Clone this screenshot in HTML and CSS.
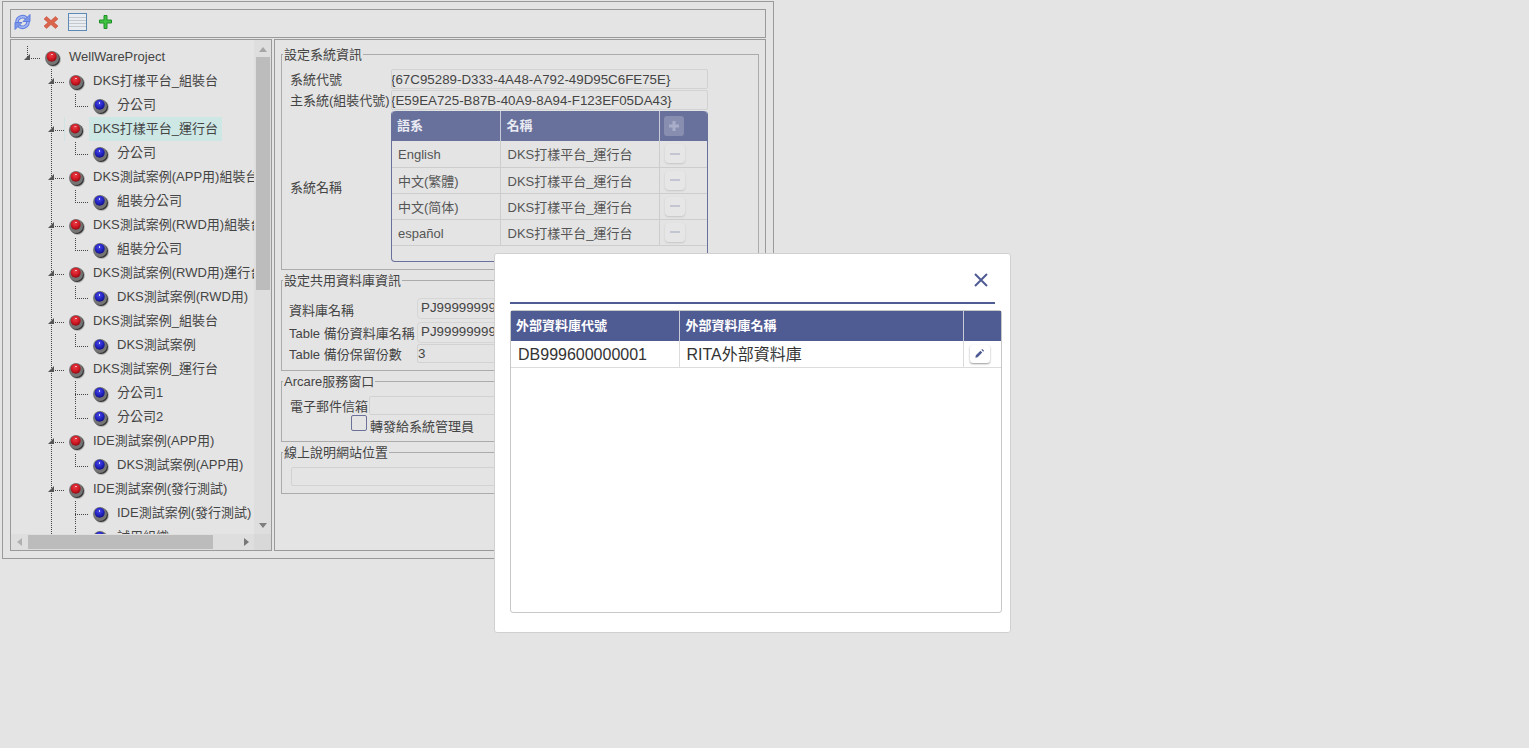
FILE: index.html
```html
<!DOCTYPE html>
<html lang="zh-Hant">
<head>
<meta charset="utf-8">
<title>WellWareProject</title>
<link rel="stylesheet" href="styles.css">
</head>
<body>
<svg class="defs" xmlns="http://www.w3.org/2000/svg">
  <defs>
    <radialGradient id="redball" cx="45%" cy="35%" r="70%"><stop offset="0" stop-color="#ea3f48"/><stop offset=".6" stop-color="#cc1620"/><stop offset="1" stop-color="#7c0b12"/></radialGradient>
    <radialGradient id="blueball" cx="45%" cy="35%" r="70%"><stop offset="0" stop-color="#4a4ae4"/><stop offset=".6" stop-color="#2020c0"/><stop offset="1" stop-color="#0f0f70"/></radialGradient>
  </defs>
  <symbol id="red" viewBox="0 0 24 24"><circle cx="13.5" cy="14.5" r="7.5" fill="#b4b4b4"/><circle cx="13" cy="14" r="7" fill="#333"/><circle cx="12" cy="13" r="7" fill="#757575"/><circle cx="11.7" cy="11.7" r="5" fill="url(#redball)"/><rect x="11" y="9" width="2" height="1" fill="#f2b4b8"/></symbol>
  <symbol id="blue" viewBox="0 0 24 24"><circle cx="13.5" cy="14.5" r="7.5" fill="#b4b4b4"/><circle cx="13" cy="14" r="7" fill="#333"/><circle cx="12" cy="13" r="7" fill="#757575"/><circle cx="11.7" cy="11.7" r="5" fill="url(#blueball)"/><rect x="11" y="9" width="1" height="2" fill="#cfd0f7"/></symbol>
  <symbol id="root-tw" viewBox="0 0 24 24"><path class="dot" d="M11.500 1V13M15 13.500H24"/><path class="arrow" d="M8 15H14V9Z"/></symbol>
  <symbol id="open" viewBox="0 0 24 24"><path class="dot" d="M11.500 0V24M15 13.500H24"/><path class="arrow" d="M8 15H14V9Z"/></symbol>
  <symbol id="elbow" viewBox="0 0 24 24"><path class="dot" d="M11.500 1V13.500H24"/></symbol>
  <symbol id="tee" viewBox="0 0 24 24"><path class="dot" d="M11.500 0V24M11 13.500H24"/></symbol>
  <symbol id="guide" viewBox="0 0 24 24"><path class="dot" d="M11.500 0V24"/></symbol>
</svg>

<main class="app">
  <div class="toolbar">
    <svg class="tool" viewBox="0 0 20 20"><g fill="none" stroke-linecap="butt"><path d="M5 9.500A5.500 5.500 0 0 1 14.500 5.500" stroke="#5f7ede" stroke-width="3.600"/><path d="M16 8.500A5.500 5.500 0 0 1 6.500 12.500" stroke="#5f7ede" stroke-width="3.600"/><path d="M5 9.500A5.500 5.500 0 0 1 14.500 5.500" stroke="#a3b6f3" stroke-width="1.600"/><path d="M16 8.500A5.500 5.500 0 0 1 6.500 12.500" stroke="#a3b6f3" stroke-width="1.600"/></g><path d="M18 1.500V8.500H11Z" fill="#7d97e8" stroke="#5f7ede"/><path d="M3 16.500V9.500H10Z" fill="#7d97e8" stroke="#5f7ede"/></svg>
    <svg class="tool" viewBox="0 0 20 20"><path d="M6.500 3.500 11 7.500l4.500-4 2.500 2.500-4 3.500 4 3.500-2.500 2.500-4.500-4-4.500 4L4 13l4-3.500-4-3.500z" fill="#d9654d" stroke="#c9503c" stroke-width=".6"/></svg>
    <svg class="tool" viewBox="0 0 20 20"><rect x=".5" y=".5" width="18" height="17" fill="#e9edf1" stroke="#5c8ab4"/><path d="M1 4.500h17M1 7.500h17M1 10.500h17M1 13.500h17" stroke="#c4c9ce"/></svg>
    <svg class="tool" viewBox="0 0 20 20"><path d="M8 2.500h3v4.500h4.500v3H11v5.500H8V10H3.500V7H8z" fill="#3fc33f" stroke="#1f8f2a"/></svg>
  </div>
  <div class="panes">
    <section class="tree-pane">
      <div class="tree-top">
        <div class="tree-view">
          <ul class="tree">
            <li class="row"><span class="pad"></span><svg class="cell"><use href="#root-tw"/></svg><span class="node"><svg class="ball"><use href="#red"/></svg><span class="label">WellWareProject</span></span></li>
            <li class="row"><span class="pad"></span><svg class="cell"><use href="#open"/></svg><span class="node"><svg class="ball"><use href="#red"/></svg><span class="label">DKS打樣平台_組裝台</span></span></li>
            <li class="row"><span class="pad"></span><svg class="cell"><use href="#guide"/></svg><svg class="cell"><use href="#elbow"/></svg><span class="node"><svg class="ball"><use href="#blue"/></svg><span class="label">分公司</span></span></li>
            <li class="row"><span class="pad"></span><svg class="cell"><use href="#open"/></svg><span class="node selected"><svg class="ball"><use href="#red"/></svg><span class="label">DKS打樣平台_運行台</span></span></li>
            <li class="row"><span class="pad"></span><svg class="cell"><use href="#guide"/></svg><svg class="cell"><use href="#elbow"/></svg><span class="node"><svg class="ball"><use href="#blue"/></svg><span class="label">分公司</span></span></li>
            <li class="row"><span class="pad"></span><svg class="cell"><use href="#open"/></svg><span class="node"><svg class="ball"><use href="#red"/></svg><span class="label">DKS測試案例(APP用)組裝台</span></span></li>
            <li class="row"><span class="pad"></span><svg class="cell"><use href="#guide"/></svg><svg class="cell"><use href="#elbow"/></svg><span class="node"><svg class="ball"><use href="#blue"/></svg><span class="label">組裝分公司</span></span></li>
            <li class="row"><span class="pad"></span><svg class="cell"><use href="#open"/></svg><span class="node"><svg class="ball"><use href="#red"/></svg><span class="label">DKS測試案例(RWD用)組裝台</span></span></li>
            <li class="row"><span class="pad"></span><svg class="cell"><use href="#guide"/></svg><svg class="cell"><use href="#elbow"/></svg><span class="node"><svg class="ball"><use href="#blue"/></svg><span class="label">組裝分公司</span></span></li>
            <li class="row"><span class="pad"></span><svg class="cell"><use href="#open"/></svg><span class="node"><svg class="ball"><use href="#red"/></svg><span class="label">DKS測試案例(RWD用)運行台</span></span></li>
            <li class="row"><span class="pad"></span><svg class="cell"><use href="#guide"/></svg><svg class="cell"><use href="#elbow"/></svg><span class="node"><svg class="ball"><use href="#blue"/></svg><span class="label">DKS測試案例(RWD用)</span></span></li>
            <li class="row"><span class="pad"></span><svg class="cell"><use href="#open"/></svg><span class="node"><svg class="ball"><use href="#red"/></svg><span class="label">DKS測試案例_組裝台</span></span></li>
            <li class="row"><span class="pad"></span><svg class="cell"><use href="#guide"/></svg><svg class="cell"><use href="#elbow"/></svg><span class="node"><svg class="ball"><use href="#blue"/></svg><span class="label">DKS測試案例</span></span></li>
            <li class="row"><span class="pad"></span><svg class="cell"><use href="#open"/></svg><span class="node"><svg class="ball"><use href="#red"/></svg><span class="label">DKS測試案例_運行台</span></span></li>
            <li class="row"><span class="pad"></span><svg class="cell"><use href="#guide"/></svg><svg class="cell"><use href="#tee"/></svg><span class="node"><svg class="ball"><use href="#blue"/></svg><span class="label">分公司1</span></span></li>
            <li class="row"><span class="pad"></span><svg class="cell"><use href="#guide"/></svg><svg class="cell"><use href="#elbow"/></svg><span class="node"><svg class="ball"><use href="#blue"/></svg><span class="label">分公司2</span></span></li>
            <li class="row"><span class="pad"></span><svg class="cell"><use href="#open"/></svg><span class="node"><svg class="ball"><use href="#red"/></svg><span class="label">IDE測試案例(APP用)</span></span></li>
            <li class="row"><span class="pad"></span><svg class="cell"><use href="#guide"/></svg><svg class="cell"><use href="#elbow"/></svg><span class="node"><svg class="ball"><use href="#blue"/></svg><span class="label">DKS測試案例(APP用)</span></span></li>
            <li class="row"><span class="pad"></span><svg class="cell"><use href="#open"/></svg><span class="node"><svg class="ball"><use href="#red"/></svg><span class="label">IDE測試案例(發行測試)</span></span></li>
            <li class="row"><span class="pad"></span><svg class="cell"><use href="#guide"/></svg><svg class="cell"><use href="#tee"/></svg><span class="node"><svg class="ball"><use href="#blue"/></svg><span class="label">IDE測試案例(發行測試)</span></span></li>
            <li class="row"><span class="pad"></span><svg class="cell"><use href="#guide"/></svg><svg class="cell"><use href="#elbow"/></svg><span class="node"><svg class="ball"><use href="#blue"/></svg><span class="label">試用組織</span></span></li>
          </ul>
        </div>
        <div class="vscroll">
          <span class="arrow-up"></span>
          <span class="vthumb"></span>
          <span class="arrow-down"></span>
        </div>
      </div>
      <div class="hscroll">
        <span class="arrow-left"></span>
        <span class="hthumb"></span>
        <span class="arrow-right"></span>
        <span class="corner"></span>
      </div>
    </section>

    <section class="form-pane">
      <fieldset class="fs fs-system">
        <legend>設定系統資訊</legend>
        <div class="frow"><label class="lab lab-sys">系統代號</label><input class="inp inp-sys" readonly value="{67C95289-D333-4A48-A792-49D95C6FE75E}"></div>
        <div class="frow"><label class="lab lab-sys">主系統(組裝代號)</label><input class="inp inp-sys" readonly value="{E59EA725-B87B-40A9-8A94-F123EF05DA43}"></div>
        <div class="frow frow-names">
          <label class="lab lab-sys">系統名稱</label>
          <div class="lang-box">
            <table class="lang">
              <thead><tr><th class="c1">語系</th><th class="c2">名稱</th><th class="c3"><span class="plus-btn"><svg viewBox="0 0 12 12" class="pm"><path d="M4.500 1h3v3.500H11v3H7.500V11h-3V7.500H1v-3h3.500z"/></svg></span></th></tr></thead>
              <tbody>
                <tr><td>English</td><td>DKS打樣平台_運行台</td><td class="c3"><span class="minus-btn"></span></td></tr>
                <tr><td>中文(繁體)</td><td>DKS打樣平台_運行台</td><td class="c3"><span class="minus-btn"></span></td></tr>
                <tr><td>中文(简体)</td><td>DKS打樣平台_運行台</td><td class="c3"><span class="minus-btn"></span></td></tr>
                <tr><td>español</td><td>DKS打樣平台_運行台</td><td class="c3"><span class="minus-btn"></span></td></tr>
              </tbody>
            </table>
          </div>
        </div>
      </fieldset>

      <fieldset class="fs fs-db">
        <legend>設定共用資料庫資訊</legend>
        <div class="frow frow-db1"><label class="lab lab-db">資料庫名稱</label><input class="inp inp-db" readonly value="PJ9999999999"></div>
        <div class="frow frow-db2"><label class="lab lab-db">Table 備份資料庫名稱</label><input class="inp inp-db" readonly value="PJ9999999999"></div>
        <div class="frow frow-db3"><label class="lab lab-db">Table 備份保留份數</label><input class="inp inp-num" readonly value="3"></div>
      </fieldset>

      <fieldset class="fs fs-arcare">
        <legend>Arcare服務窗口</legend>
        <div class="frow"><label class="lab lab-mail">電子郵件信箱</label><input class="inp inp-mail" readonly></div>
        <div class="frow frow-check"><input type="checkbox" class="check" id="fwd"><label class="check-lab" for="fwd">轉發給系統管理員</label></div>
      </fieldset>

      <fieldset class="fs fs-help">
        <legend>線上說明網站位置</legend>
        <input class="inp inp-help" readonly>
      </fieldset>
    </section>
  </div>
</main>

<div class="dialog" role="dialog">
  <header class="dialog-head">
    <svg class="close" viewBox="0 0 16 16"><path d="M2 2 14 14M14 2 2 14"/></svg>
  </header>
  <div class="grid-box">
    <table class="grid">
      <thead><tr><th class="g1">外部資料庫代號</th><th class="g2">外部資料庫名稱</th><th class="g3"></th></tr></thead>
      <tbody>
        <tr>
          <td>DB999600000001</td>
          <td>RITA外部資料庫</td>
          <td class="g3"><span class="edit-btn"><svg viewBox="0 0 12 12" class="pencil"><path d="M1.500 10.500 2 8l5-5 2 2-5 5zM8 2l1-1 2 2-1 1z"/></svg></span></td>
        </tr>
      </tbody>
    </table>
  </div>
</div>
</body>
</html>
```
FILE: styles.css
```css
* { box-sizing: border-box; }
html, body { height: 100%; }
body {
  margin: 0;
  padding: 1px 0 0 2px;
  background: #e4e4e4;
  color: #444;
  font: 13px/16px "Liberation Sans", "Noto Sans CJK TC", sans-serif;
  overflow: hidden;
}
.defs { display: block; width: 0; height: 0; }
.dot { fill: none; stroke: #444; stroke-dasharray: 1 1; shape-rendering: crispEdges; }
.arrow { fill: #555; stroke: none; }

.app {
  width: 772px;
  height: 558px;
  border: 1px solid #9a9a9a;
  padding: 7px;
}
.toolbar {
  display: flex;
  align-items: flex-start;
  gap: 8px;
  height: 29px;
  border: 1px solid #9a9a9a;
  padding: 3px 0 0 1px;
}
.tool { width: 20px; height: 20px; flex: none; }
.panes { display: flex; gap: 2px; margin-top: 1px; height: 512px; }

/* tree */
.tree-pane {
  width: 262px;
  flex: none;
  display: flex;
  flex-direction: column;
  border: 1px solid #9a9a9a;
}
.tree-top { display: flex; height: 494px; }
.tree-view { width: 243px; overflow: hidden; flex: none; }
.tree { list-style: none; margin: 0; padding: 5px 0 0 5px; width: 400px; }
.row { display: flex; height: 24px; }
.pad { width: 24px; flex: none; }
.row:first-child .pad { display: none; }
.cell { width: 24px; height: 24px; flex: none; }
.node { display: flex; flex: none; height: 24px; }
.ball { width: 24px; height: 24px; flex: none; }
.label { margin-left: 1px; padding: 3px 4px 0 4px; white-space: nowrap; line-height: 18px; }
.node.selected { border-left: 1px solid #cfe3e2; }
.node.selected .ball { width: 23px; }
.node.selected .ball use { transform: translateX(-1px); }
.node.selected .label { background: #cde7e5; }

.vscroll {
  width: 17px;
  flex: none;
  background: #dedede;
  display: flex;
  flex-direction: column;
  align-items: center;
}
.arrow-up { margin-top: 7px; border: 4px solid transparent; border-top: 0; border-bottom: 5px solid #a6a6a6; }
.vthumb { width: 14px; height: 233px; margin-top: 5px; background: #bcbcbc; }
.arrow-down { margin-top: auto; margin-bottom: 6px; border: 4px solid transparent; border-bottom: 0; border-top: 5px solid #7e7e7e; }

.hscroll {
  flex: 1;
  display: flex;
  align-items: center;
  background: #dedede;
}
.arrow-left { margin-left: 6px; border: 4px solid transparent; border-left: 0; border-right: 5px solid #b0b0b0; }
.hthumb { width: 185px; height: 14px; margin-left: 6px; background: #bcbcbc; }
.arrow-right { margin-left: 31px; border: 4px solid transparent; border-right: 0; border-left: 5px solid #777; }
.corner { align-self: stretch; width: 17px; margin-left: auto; background: #d8d8d8; }

/* form */
.form-pane {
  flex: 1;
  border: 1px solid #9a9a9a;
  padding: 5px 6px 0 6px;
}
.fs {
  margin: 0 0 1px;
  padding: 0;
  border: 1px solid #ababab;
  min-width: 0;
}
legend { margin-left: 1px; padding: 2px 1px 1px; line-height: 16px; color: #444; }
.frow { display: flex; align-items: center; padding-left: 8px; }
.lab { flex: none; white-space: nowrap; padding-top: 2px; }
.lab-sys { width: 101px; }
.lab-db { width: 128px; }
.lab-mail { width: 79px; }
.inp {
  display: block;
  height: 20px;
  padding: 0 1px;
  border: 1px solid #d2d2d2;
  border-radius: 2px;
  background: #e4e4e4;
  color: #444;
  font: 13.333px "Liberation Sans", "Noto Sans CJK TC", sans-serif;
  outline: none;
}
.fs-system { height: 225px; padding-top: 5px; }
.fs-system .frow { margin-bottom: 1px; }
.inp-sys { width: 317px; padding: 0; text-indent: -1px; }
.frow-names { align-items: center; }
.frow-names .lab { padding-top: 3px; }
.lang-box {
  width: 317px;
  height: 151px;
  border: 1px solid #68719c;
  border-top: 0;
  border-radius: 4px;
}
.lang { width: 100%; border-collapse: collapse; table-layout: fixed; }
.lang th {
  height: 30px;
  background: #68719c;
  color: #e9eaf2;
  font-weight: bold;
  text-align: left;
  padding: 0 5px;
  border-right: 1px solid #c8cad6;
}
.lang th.c2 { padding-left: 6px; }
.lang th:last-child { border-right: 0; border-radius: 0 4px 0 0; }
.lang th:first-child { border-radius: 4px 0 0 0; }
.lang td {
  height: 26px;
  padding: 3px 6px 0;
  border-right: 1px solid #cdcdcd;
  border-bottom: 1px solid #cdcdcd;
  color: #555;
  white-space: nowrap;
}
.lang td:nth-child(2) { padding-left: 7px; }
.lang td:last-child { border-right: 0; }
.c1 { width: 108px; }
.c2 { width: 159px; }
.lang .c3 { padding: 0 0 0 5px; }
.plus-btn {
  display: flex;
  width: 20px;
  height: 20px;
  margin-left: -1px;
  background: #878eb0;
  border-radius: 3px;
  align-items: center;
  justify-content: center;
}
.pm { width: 12px; height: 12px; fill: #a9aec8; }
.minus-btn {
  display: flex;
  width: 20px;
  height: 19px;
  border-radius: 4px;
  background: #e6e6e6;
  box-shadow: 0 1px 2px #c4c4c4;
  align-items: center;
  justify-content: center;
}
.minus-btn::before { content: ""; width: 10px; height: 2px; background: #c3c6d2; }

.fs-db { height: 100px; padding-top: 8px; }
.frow-db1 { padding-left: 7px; height: 21px; margin-bottom: 3px; }
.frow-db1 .lab { padding-top: 4px; }
.frow-db2 { padding-left: 7px; height: 21px; margin-bottom: 1px; }
.frow-db3 { padding-left: 7px; height: 19px; }
.inp-db { width: 100px; height: 100%; padding: 0 3px 2px; border-color: #d6d6d6; border-radius: 4px; }
.inp-num { width: 100px; height: 100%; padding: 0; }

.fs-arcare { height: 70px; padding-top: 5px; }
.inp-mail { width: 160px; height: 19px; }
.frow-check { padding-left: 69px; align-items: flex-end; }
.check {
  appearance: none;
  width: 16px;
  height: 16px;
  margin: 0 3px 0 0;
  border: 1px solid #6a7299;
  border-radius: 2px;
  background: #e4e4e4;
}
.check-lab { line-height: 16px; margin-bottom: -4px; }

.fs-help { height: 51px; padding: 5px 0 0; }
.inp-help { width: 400px; height: 19px; margin-left: 9px; }

/* dialog */
.dialog {
  position: fixed;
  left: 494px;
  top: 253px;
  width: 517px;
  height: 380px;
  background: #fff;
  border: 1px solid #d0d0d0;
  border-radius: 3px;
  padding: 0 15px;
}
.dialog-head {
  display: flex;
  justify-content: flex-end;
  align-items: flex-start;
  height: 50px;
  padding: 18px 6px 0 0;
  border-bottom: 2px solid #4f5b93;
}
.close { width: 16px; height: 16px; fill: none; stroke: #4f5b93; stroke-width: 2; }
.grid-box {
  width: 492px;
  height: 303px;
  margin-top: 6px;
  border: 1px solid #c8c8c8;
  border-radius: 3px;
}
.grid { width: 100%; border-collapse: collapse; table-layout: fixed; }
.grid th {
  height: 30px;
  padding: 0 5px;
  background: #4f5b93;
  color: #fff;
  font-weight: bold;
  text-align: left;
  border-right: 1px solid #c8cad6;
}
.grid th.g2 { padding-left: 6px; }
.grid th:last-child { border-right: 0; }
.grid td {
  height: 26px;
  padding: 2px 7px 0;
  border-right: 1px solid #dcdcdc;
  border-bottom: 1px solid #dcdcdc;
  color: #333;
  font-size: 16px;
  white-space: nowrap;
}
.grid td:last-child { border-right: 0; }
.g1 { width: 168px; }
.g2 { width: 284px; }
.grid .g3 { padding: 0 0 0 6px; }
.edit-btn {
  display: flex;
  width: 20px;
  height: 18px;
  background: #fff;
  border-radius: 3px;
  box-shadow: 0 1px 2px #9a9a9a;
  align-items: center;
  justify-content: center;
}
.pencil { width: 11px; height: 11px; fill: #4f5b93; }
```
